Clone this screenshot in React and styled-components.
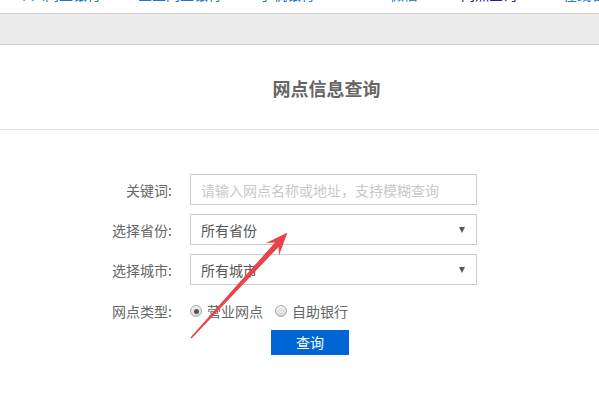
import React from "react";
import styled, { createGlobalStyle } from "styled-components";

const Global = createGlobalStyle`
  html, body { margin: 0; padding: 0; background: #fff; }
  body { font-family: "Noto Sans CJK SC", "Noto Sans", sans-serif; }
  * { box-sizing: border-box; }
`;

const Page = styled.div`
  position: relative;
  width: 599px;
  height: 399px;
  overflow: hidden;
  background: #fff;
`;

const NavStrip = styled.div`
  height: 2px;
  max-height: 2px;
  overflow: hidden;
`;

const NavRow = styled.div`
  display: flex;
  margin-top: -13px;
  height: 14px;
  padding-left: 17px;
`;

const NavItem = styled.span`
  font-size: 14px;
  line-height: 14px;
  height: 14px;
  white-space: nowrap;
  color: ${(p) => (p.$dark ? "#1b2a7a" : "#2a6fd6")};
  margin-right: ${(p) => p.$gap}px;
`;

const Band = styled.div`
  margin-top: 11px;
  height: 32px;
  background: #ececec;
  border-top: 1px solid #cccccc;
  border-bottom: 1px solid #cccccc;
`;

const TitleBar = styled.div`
  height: 85px;
  border-bottom: 1px solid #dddddd;
  display: flex;
  align-items: center;
  justify-content: center;
  padding-left: 54px;
  padding-top: 2px;
`;

const Title = styled.h1`
  margin: 0;
  font-size: 18px;
  font-weight: 700;
  color: #666666;
`;

const Form = styled.div`
  margin-top: 44px;
  display: grid;
  grid-template-columns: 172px 287px;
  column-gap: 18px;
  row-gap: 9px;
  grid-auto-rows: 31px;
`;

const Label = styled.div`
  font-size: 14px;
  color: #666666;
  display: flex;
  align-items: center;
  justify-content: flex-end;
  height: ${(p) => p.$h || 31}px;
`;

const Input = styled.input`
  width: 287px;
  height: 31px;
  border: 1px solid #cccccc;
  padding: 0 10px;
  font-family: inherit;
  font-size: 14px;
  color: #555;
  outline: none;
  &::placeholder { color: #c8c8c8; }
`;

const Select = styled.div`
  width: 287px;
  height: 31px;
  border: 1px solid #cccccc;
  padding: 0 10px;
  font-size: 14px;
  color: #555;
  display: flex;
  align-items: center;
  justify-content: space-between;
`;

const Caret = styled.span`
  width: 0;
  height: 0;
  border-left: 3px solid transparent;
  border-right: 3px solid transparent;
  border-top: 6px solid #555;
  margin-right: 1px;
`;

const RadioRow = styled.div`
  display: flex;
  align-items: center;
  height: 34px;
`;

const RadioOpt = styled.label`
  display: flex;
  align-items: center;
  font-size: 14px;
  color: #666;
  margin-right: 12px;
`;

const RadioDot = styled.span`
  width: 12px;
  height: 12px;
  border-radius: 50%;
  border: 1px solid #a9a9a9;
  background: linear-gradient(#f4f4f4, #d6d6d6);
  margin-right: 5px;
  display: flex;
  align-items: center;
  justify-content: center;
  &::after {
    content: "";
    width: 5px;
    height: 5px;
    border-radius: 50%;
    background: ${(p) => (p.$checked ? "#555" : "transparent")};
  }
`;

const ButtonCell = styled.div`
  grid-column: 2;
  height: 25px;
  margin-top: -5px;
`;

const Button = styled.button`
  margin-left: 81px;
  width: 78px;
  height: 25px;
  border: none;
  background: #0066d5;
  color: #fff;
  font-family: inherit;
  font-size: 14px;
  padding: 0;
  cursor: pointer;
`;

const Overlay = styled.svg`
  position: absolute;
  left: 0;
  top: 0;
  pointer-events: none;
`;

export default function App() {
  return (
    <Page>
      <Global />
      <NavStrip>
        <NavRow>
          <NavItem $gap={37}>个人网上银行</NavItem>
          <NavItem $gap={37}>企业网上银行</NavItem>
          <NavItem $gap={75}>手机银行</NavItem>
          <NavItem $gap={43}>微信</NavItem>
          <NavItem $gap={46} $dark>网点查询</NavItem>
          <NavItem $gap={20}>在线客服</NavItem>
        </NavRow>
      </NavStrip>
      <Band />
      <TitleBar>
        <Title>网点信息查询</Title>
      </TitleBar>
      <Form>
        <Label>关键词:</Label>
        <Input placeholder="请输入网点名称或地址，支持模糊查询" />
        <Label>选择省份:</Label>
        <Select>
          所有省份
          <Caret />
        </Select>
        <Label>选择城市:</Label>
        <Select>
          所有城市
          <Caret />
        </Select>
        <Label $h={34}>网点类型:</Label>
        <RadioRow>
          <RadioOpt>
            <RadioDot $checked />
            营业网点
          </RadioOpt>
          <RadioOpt>
            <RadioDot />
            自助银行
          </RadioOpt>
        </RadioRow>
        <ButtonCell>
          <Button>查询</Button>
        </ButtonCell>
      </Form>
      <Overlay width="599" height="399" viewBox="0 0 599 399">
        <polygon
          fill="#e8454a"
          points="191.6,338.6 278.6,246.9 279,255.5 287.5,232.5 265.6,243.2 275,242.5 190.4,337.4"
        />
      </Overlay>
    </Page>
  );
}
